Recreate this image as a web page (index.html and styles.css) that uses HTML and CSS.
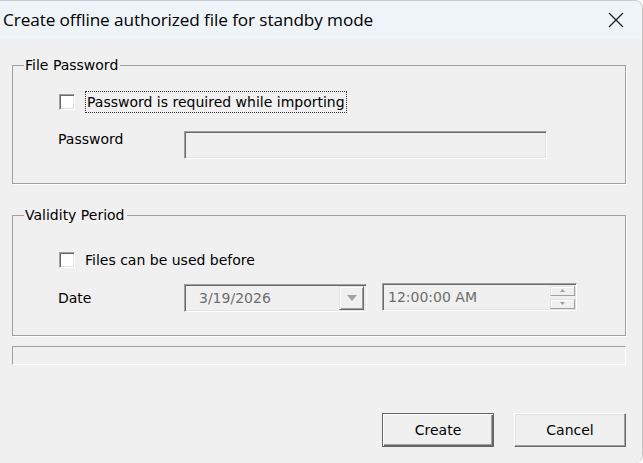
FILE: index.html
```html
<!DOCTYPE html>
<html>
<head>
<meta charset="utf-8">
<link rel="stylesheet" href="styles.css">
</head>
<body>
<div class="window">
  <div class="titlebar">
    <span class="title">Create offline authorized file for standby mode</span>
    <span class="close">
      <svg width="16" height="16" viewBox="0 0 16 16"><path d="M1 1 L15 15 M15 1 L1 15" stroke="#1b1b1b" stroke-width="1.2" fill="none"/></svg>
    </span>
  </div>
  <div class="content">
    <fieldset class="group g1">
      <legend>File Password</legend>
      <div class="row check-row r1">
        <span class="checkbox"></span>
        <span class="check-label focus">Password is required while importing</span>
      </div>
      <div class="row field-row r2">
        <span class="label">Password</span>
        <div class="sunken pw"></div>
      </div>
    </fieldset>
    <fieldset class="group g2">
      <legend>Validity Period</legend>
      <div class="row check-row r3">
        <span class="checkbox"></span>
        <span class="check-label">Files can be used before</span>
      </div>
      <div class="row field-row r4">
        <span class="label">Date</span>
        <div class="sunken combo">
          <span class="value date-val">3/19/2026</span>
          <span class="drop">
            <svg width="10" height="6" viewBox="0 0 10 6"><path d="M0 0 H10 L5 6 Z" fill="#a0a0a0"/></svg>
          </span>
        </div>
        <div class="sunken timebox">
          <span class="value time-val">12:00:00 AM</span>
          <span class="spin">
            <span class="spin-btn"><svg width="5" height="3" viewBox="0 0 5 3"><path d="M2.5 0 L5 3 H0 Z" fill="#a0a0a0"/></svg></span>
            <span class="spin-btn"><svg width="5" height="3" viewBox="0 0 5 3"><path d="M0 0 H5 L2.5 3 Z" fill="#a0a0a0"/></svg></span>
          </span>
        </div>
      </div>
    </fieldset>
    <div class="progress"></div>
    <div class="buttons">
      <button class="btn default">Create</button>
      <button class="btn">Cancel</button>
    </div>
  </div>
</div>
</body>
</html>
```

FILE: styles.css
```css
html, body {
  margin: 0;
  padding: 0;
  background: #ffffff;
}
.window {
  width: 643px;
  height: 463px;
  box-sizing: border-box;
  background: #f0f0f0;
  border-top: 1px solid #c9cdd2;
  border-right: 1px solid #c4c4c4;
  border-top-right-radius: 8px;
  border-bottom-right-radius: 8px;
  overflow: hidden;
  font-family: "DejaVu Sans", sans-serif;
  font-size: 14px;
  color: #000;
}
.titlebar {
  height: 38px;
  background: #eff4f9;
  display: flex;
  align-items: center;
  justify-content: space-between;
}
.title {
  font-family: "Open Sans", "Noto Sans", sans-serif;
  font-size: 17.2px;
  padding-left: 3px;
  color: #000;
  letter-spacing: -0.1px;
  margin-top: -1px;
}
.close {
  width: 16px;
  height: 16px;
  margin-right: 18px;
  margin-top: -1px;
  display: flex;
}
.content {
  display: flex;
  flex-direction: column;
}
.group {
  margin: 0 16px 0 12px;
  border: 1px solid #a0a0a0;
  box-shadow: 1px 1px 0 #ffffff;
  padding: 0 0 0 11px;
}
.group legend {
  padding: 0 2px 0 1px;
  line-height: 20px;
  height: 20px;
  font-size: 14px;
}
.g1 {
  margin-top: 16px;
  padding-top: 16px;
  padding-bottom: 24px;
}
.g2 {
  margin-top: 21px;
  padding-top: 24px;
  padding-bottom: 23px;
}
.row {
  display: flex;
  align-items: center;
  margin-left: 34px;
}
.check-row {
  height: 22px;
}
.field-row {
  height: 28px;
}
.r2 {
  margin-top: 18px;
}
.r4 {
  margin-top: 13px;
}
.checkbox {
  box-sizing: border-box;
  width: 16px;
  height: 16px;
  margin-left: 1px;
  margin-right: 10px;
  background: #ffffff;
  border: 1px solid;
  border-color: #a0a0a0 #ffffff #ffffff #a0a0a0;
  box-shadow: inset 1px 1px 0 #696969, inset -1px -1px 0 #e3e3e3;
}
.check-label {
  line-height: 20px;
}
.focus {
  border: 1px dotted #333333;
  padding: 0 1px 0 1px;
}
.label {
  width: 126px;
  flex: none;
  margin-top: -12px;
}
.r4 .label {
  margin-top: 0;
}
.sunken {
  box-sizing: border-box;
  height: 28px;
  border: 1px solid;
  border-color: #a0a0a0 #ffffff #ffffff #a0a0a0;
  box-shadow: inset 1px 1px 0 #696969, inset -1px -1px 0 #e3e3e3;
  background: #f0f0f0;
}
.pw {
  width: 363px;
}
.combo {
  width: 183px;
  display: flex;
  align-items: center;
  justify-content: space-between;
}
.timebox {
  width: 195px;
  margin-left: 15px;
  margin-top: -2px;
  display: flex;
  align-items: center;
  justify-content: space-between;
}
.value {
  color: #6d6d6d;
}
.date-val {
  padding-left: 14px;
}
.time-val {
  padding-left: 5px;
}
.drop {
  box-sizing: border-box;
  width: 25px;
  height: 24px;
  margin-right: 2px;
  display: flex;
  align-items: center;
  justify-content: center;
  border: 1px solid;
  border-color: #e3e3e3 #696969 #696969 #e3e3e3;
  box-shadow: inset 1px 1px 0 #ffffff, inset -1px -1px 0 #a0a0a0;
}
.spin {
  display: flex;
  flex-direction: column;
  gap: 3px;
  margin-right: 1px;
}
.spin-btn {
  box-sizing: border-box;
  width: 25px;
  height: 10px;
  display: flex;
  align-items: center;
  justify-content: center;
  border: 1px solid;
  border-color: #e3e3e3 #a0a0a0 #a0a0a0 #e3e3e3;
  box-shadow: inset 1px 1px 0 #ffffff;
}
.progress {
  box-sizing: border-box;
  margin: 10px 16px 0 12px;
  height: 19px;
  border: 1px solid;
  border-color: #a0a0a0 #ffffff #ffffff #a0a0a0;
}
.buttons {
  display: flex;
  justify-content: flex-end;
  gap: 20px;
  margin: 48px 16px 0 0;
}
.btn {
  box-sizing: border-box;
  width: 112px;
  height: 34px;
  font-family: "DejaVu Sans", sans-serif;
  font-size: 14px;
  color: #000;
  background: #f0f0f0;
  border: 1px solid;
  border-color: #ffffff #696969 #696969 #ffffff;
  box-shadow: inset -1px -1px 0 #a0a0a0, inset 1px 1px 0 #e3e3e3;
  padding: 0;
}
.btn.default {
  border: 1px solid #646464;
  box-shadow: inset 1px 1px 0 #ffffff, inset -1px -1px 0 #696969, inset -2px -2px 0 #a0a0a0;
}
```
